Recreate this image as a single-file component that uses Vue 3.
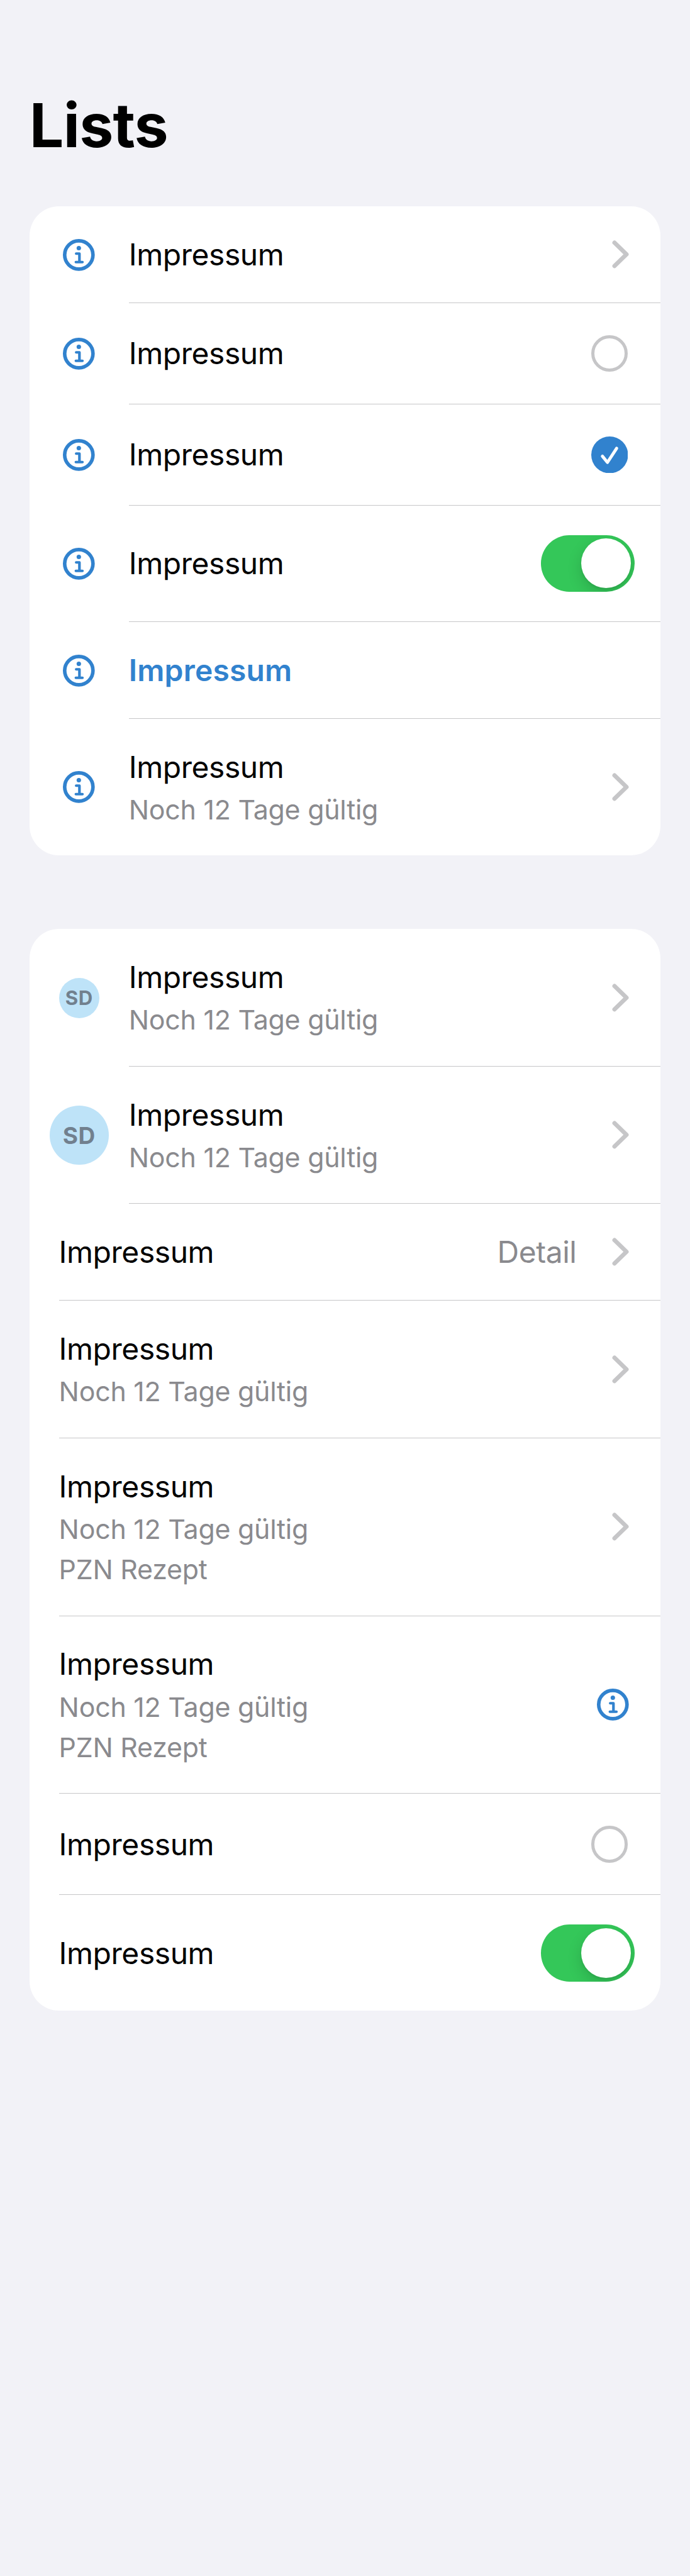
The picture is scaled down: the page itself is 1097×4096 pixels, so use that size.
<script setup>
const groups = [
  [
    { lead: 'info', trail: 'chevron' },
    { lead: 'info', trail: 'radio', size: 'mid' },
    { lead: 'info', trail: 'check', size: 'mid' },
    { lead: 'info', trail: 'toggle', size: 'tall' },
    { lead: 'info', action: true },
    { lead: 'info', trail: 'chevron', subs: ['Noch 12 Tage gültig'] },
  ],
  [
    { lead: 'avatar', trail: 'chevron', subs: ['Noch 12 Tage gültig'] },
    { lead: 'avatar-large', trail: 'chevron', subs: ['Noch 12 Tage gültig'] },
    { detail: 'Detail', trail: 'chevron' },
    { trail: 'chevron', subs: ['Noch 12 Tage gültig'] },
    { trail: 'chevron', subs: ['Noch 12 Tage gültig', 'PZN Rezept'] },
    { trail: 'info', subs: ['Noch 12 Tage gültig', 'PZN Rezept'] },
    { trail: 'radio', size: 'mid' },
    { trail: 'toggle', size: 'tall' },
  ],
]
</script>

<template>
  <main class="page">
    <h1 class="heading">Lists</h1>
    <section v-for="(rows, g) in groups" :key="g" class="card">
      <div v-for="(row, r) in rows" :key="r" class="row">
        <div v-if="row.lead" class="lead">
          <svg v-if="row.lead === 'info'" class="info" viewBox="-27 -27 54 54">
            <circle r="23.1" fill="none" stroke="currentColor" stroke-width="5.8" />
            <circle cy="-11.2" r="3.6" fill="currentColor" />
            <path d="M-4.3-2.1H1V11.7M-4.8 11.7H5.9" fill="none" stroke="currentColor" stroke-width="4.3" stroke-linecap="round" stroke-linejoin="round" />
          </svg>
          <span v-else :class="['avatar', { large: row.lead === 'avatar-large' }]">SD</span>
        </div>
        <div :class="['body', row.size]">
          <div class="texts">
            <span :class="['title', { action: row.action }]">Impressum</span>
            <span v-for="s in row.subs" :key="s" class="sub">{{ s }}</span>
          </div>
          <span v-if="row.detail" class="detail">{{ row.detail }}</span>
          <svg v-if="row.trail === 'chevron'" class="chevron" viewBox="-27 -24 28 48">
            <path d="M-22.9-19-3.4 0-22.9 19" fill="none" stroke="currentColor" stroke-width="7" stroke-linecap="round" stroke-linejoin="round" />
          </svg>
          <span v-else-if="row.trail === 'radio'" class="radio"></span>
          <svg v-else-if="row.trail === 'check'" class="check" viewBox="-30 -30 60 60">
            <circle r="30" fill="currentColor" />
            <path d="M-11.8 2.2-3.6 12.3 11.4-10.7" fill="none" stroke="#fff" stroke-width="5" stroke-linecap="round" stroke-linejoin="round" />
          </svg>
          <span v-else-if="row.trail === 'toggle'" class="toggle"><span class="knob"></span></span>
          <svg v-else-if="row.trail === 'info'" class="info end" viewBox="-27 -27 54 54">
            <circle r="23.1" fill="none" stroke="currentColor" stroke-width="5.8" />
            <circle cy="-11.2" r="3.6" fill="currentColor" />
            <path d="M-4.3-2.1H1V11.7M-4.8 11.7H5.9" fill="none" stroke="currentColor" stroke-width="4.3" stroke-linecap="round" stroke-linejoin="round" />
          </svg>
        </div>
      </div>
    </section>
  </main>
</template>

<style>
body {
  margin: 0;
  background: #f2f2f7;
}
</style>

<style scoped>
.page {
  zoom: 0.975;
  box-sizing: border-box;
  width: 1125px;
  height: 4200px;
  padding: 144.3px 48px 0;
  background: #f2f2f7;
  font-family: Inter, 'Liberation Sans', sans-serif;
  color: #000;
}
.heading {
  margin: 0;
  height: 192px;
  line-height: 119px;
  font-size: 99.2px;
  font-weight: 700;
  letter-spacing: -0.8px;
}
.card {
  width: 1029px;
  margin-bottom: 120px;
  border-radius: 48px;
  background: #fff;
  overflow: hidden;
}
.row {
  display: flex;
  padding-left: 48px;
}
.lead {
  flex: none;
  display: flex;
  align-items: center;
  justify-content: center;
  width: 66px;
  margin-right: 48px;
}
.info {
  flex: none;
  display: block;
  width: 54px;
  height: 54px;
  color: #3182ce;
}
.info.end {
  margin-right: 9px;
}
.avatar {
  flex: none;
  display: flex;
  align-items: center;
  justify-content: center;
  width: 66px;
  height: 66px;
  border-radius: 50%;
  background: #bee3f8;
  color: #71808e;
  font-size: 32px;
  font-weight: 700;
  letter-spacing: 0.6px;
}
.avatar.large {
  width: 96px;
  height: 96px;
  margin: 0 -15px;
  font-size: 38px;
}
.body {
  flex: 1;
  display: flex;
  align-items: center;
  box-sizing: border-box;
  min-height: 158px;
  padding: 48px 42px 48px 0;
  border-bottom: 1px solid #c6c6c8;
}
.body.mid {
  min-height: 165px;
}
.body.tall {
  min-height: 190px;
}
.row:last-child .body {
  border-bottom: 0;
}
.row:last-child .body.tall {
  min-height: 189px;
}
.texts {
  flex: 1;
  display: flex;
  flex-direction: column;
  gap: 12px;
  white-space: nowrap;
}
.title,
.detail {
  font-size: 49.2px;
  line-height: 63px;
  margin-bottom: -2px;
  letter-spacing: -0.45px;
}
.title.action {
  color: #3182ce;
  font-weight: 600;
  letter-spacing: 0.2px;
}
.sub {
  font-size: 44px;
  line-height: 54px;
  letter-spacing: -0.25px;
  color: #8a8a8e;
}
.detail {
  margin-right: 58px;
  color: #8a8a8e;
}
.chevron {
  flex: none;
  display: block;
  width: 28px;
  height: 48px;
  margin-right: 9px;
  color: #c6c6c8;
}
.radio {
  flex: none;
  box-sizing: border-box;
  width: 60px;
  height: 60px;
  margin-right: 11px;
  border: 5.2px solid #c6c6c8;
  border-radius: 50%;
}
.check {
  flex: none;
  display: block;
  width: 60px;
  height: 60px;
  margin-right: 11px;
  color: #3182ce;
}
.toggle {
  flex: none;
  display: flex;
  justify-content: flex-end;
  box-sizing: border-box;
  width: 153px;
  height: 93px;
  padding: 6px;
  border-radius: 47px;
  background: #34c759;
  overflow: hidden;
}
.knob {
  width: 81px;
  height: 81px;
  border-radius: 50%;
  background: #fff;
  box-shadow: 0 9px 24px rgba(0, 0, 0, 0.15), 0 3px 3px rgba(0, 0, 0, 0.06);
}
</style>
